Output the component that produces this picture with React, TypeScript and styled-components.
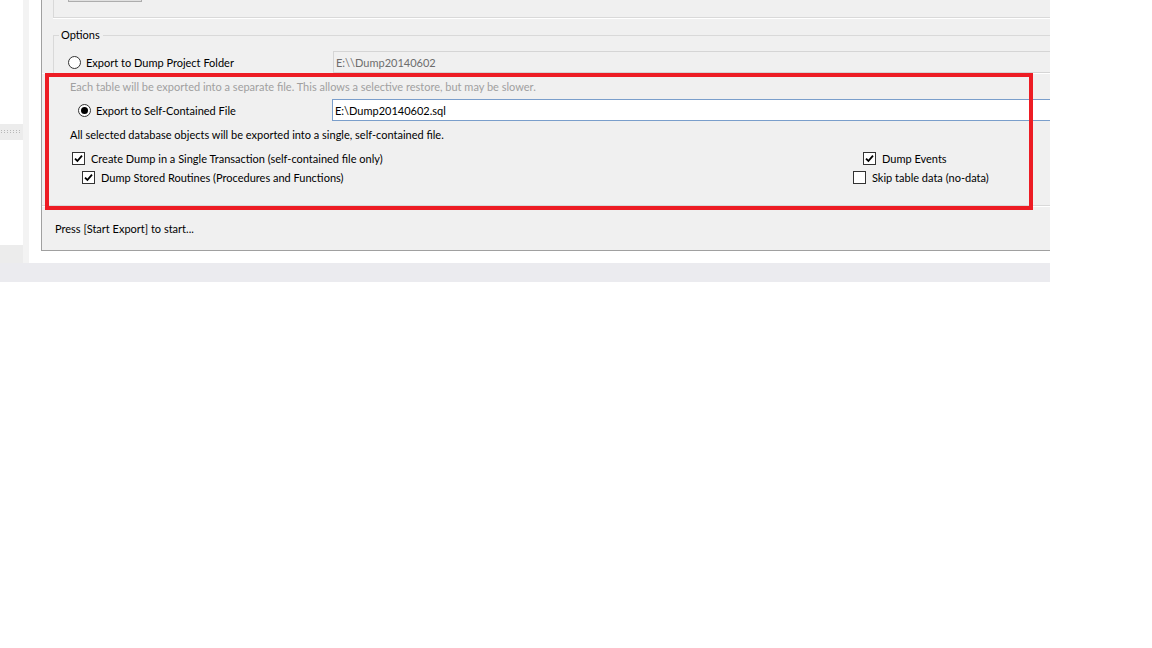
import * as React from 'react';
import styled, { createGlobalStyle } from 'styled-components';

const uiFont = `Lato, "Noto Sans", "Liberation Sans", sans-serif`;

const GlobalStyle = createGlobalStyle`
	html, body {
		margin: 0;
		padding: 0;
		background: #ffffff;
	}
	body {
		font-family: ${uiFont};
		font-size: 11px;
		color: #000000;
	}
`;

const Screen = styled.div`
	width: 1050px;
	display: flex;
	flex-direction: column;
	overflow: hidden;
`;
const Workspace = styled.div`
	display: flex;
	height: 263px;
`;
const Sidebar = styled.div`
	width: 23px;
	display: flex;
	flex-direction: column;
	background: #ffffff;
`;
const SideBlock = styled.div<{ $h?: number; $grey?: boolean }>`
	height: ${p => (p.$h ? `${p.$h}px` : 'auto')};
	flex: ${p => (p.$h ? 'none' : '1')};
	background: ${p => (p.$grey ? '#ececec' : '#ffffff')};
`;
const Grip = styled.div`
	height: 16px;
	background: #ececec;
	display: flex;
	align-items: center;
	padding-left: 1px;
	svg { display: block; }
`;
const Splitter = styled.div`
	width: 6px;
	background: #f3f3f3;
`;
const MainArea = styled.div`
	flex: 1;
	background: #ffffff;
	padding-left: 12px;
	min-width: 0;
`;
const Panel = styled.div`
	height: 251px;
	box-sizing: border-box;
	background: #f0f0f0;
	border-left: 1px solid #a0a0a0;
	border-bottom: 1px solid #a0a0a0;
	display: flex;
	flex-direction: column;
`;
const BottomBand = styled.div`
	height: 19px;
	background: #ebebef;
`;

const TopTail = styled.div`
	height: 17px;
	margin-left: 11px;
	border-left: 1px solid #d9d9d9;
	border-bottom: 1px solid #d9d9d9;
	box-shadow: 0 1px 0 #ffffff;
`;
const ButtonStub = styled.div`
	margin-left: 14px;
	width: 72px;
	height: 1px;
	background: #e1e1e1;
	border: 1px solid #adadad;
	border-top: none;
`;

const Group = styled.fieldset`
	margin: 10px 0 0 11px;
	padding: 0;
	border: none;
	border-top: 1px solid #d9d9d9;
	border-left: 1px solid #d9d9d9;
	min-width: 0;
`;
const Legend = styled.legend`
	margin-left: 5px;
	padding: 0 3px 0 2px;
	line-height: 14px;
	font-size: 11px;
`;
const LegendGap = styled.div`
	height: 9px;
`;

const ChoiceRow = styled.div<{ $labelCol: number; $indent: number }>`
	display: grid;
	grid-template-columns: ${p => p.$labelCol}px 1fr;
	align-items: center;
	height: 22px;
	padding-left: ${p => p.$indent}px;
`;
const Choice = styled.label`
	display: flex;
	align-items: center;
	gap: 5px;
	white-space: nowrap;
`;
const RadioDot = styled.span<{ $on?: boolean }>`
	width: 13px;
	height: 13px;
	box-sizing: border-box;
	border-radius: 50%;
	border: 1px solid #333333;
	background: #ffffff;
	display: flex;
	align-items: center;
	justify-content: center;
	flex: none;
	&::after {
		content: '';
		display: ${p => (p.$on ? 'block' : 'none')};
		width: 7px;
		height: 7px;
		border-radius: 50%;
		background: #000000;
	}
`;
const TextBox = styled.div<{ $disabled?: boolean }>`
	height: 22px;
	box-sizing: border-box;
	border: 1px solid ${p => (p.$disabled ? '#d5d5d5' : '#7a9ecb')};
	border-right: none;
	background: ${p => (p.$disabled ? '#f0f0f0' : '#ffffff')};
	color: ${p => (p.$disabled ? '#6d6d6d' : '#000000')};
	padding-left: 2px;
	display: flex;
	align-items: center;
	white-space: nowrap;
`;

const Pasted = styled.div`
	position: relative;
	border-top: 1px solid #ffffff;
	border-bottom: 1px solid #d9d9d9;
	box-shadow: 0 1px 0 #ffffff;
	padding-bottom: 18px;
`;
const Note = styled.div<{ $muted?: boolean; $h: number }>`
	height: ${p => p.$h}px;
	display: flex;
	align-items: center;
	padding-left: 28px;
	color: ${p => (p.$muted ? '#a0a0a0' : '#000000')};
	white-space: nowrap;
`;
const CheckGrid = styled.div`
	display: grid;
	grid-template-columns: 781px 1fr;
	grid-auto-rows: 19px;
	margin-top: 2px;
	padding-left: 30px;
`;
const CheckItem = styled.label<{ $indent?: number }>`
	display: flex;
	align-items: center;
	gap: 6px;
	padding-left: ${p => p.$indent || 0}px;
	white-space: nowrap;
`;
const Box = styled.span`
	width: 13px;
	height: 13px;
	box-sizing: border-box;
	border: 1px solid #333333;
	background: #ffffff;
	display: flex;
	align-items: center;
	justify-content: center;
	flex: none;
	svg { display: block; }
`;
const RedFrame = styled.div`
	position: absolute;
	left: 3px;
	top: -1px;
	width: 988px;
	height: 137px;
	box-sizing: border-box;
	border: 4px solid #ed1c24;
	pointer-events: none;
`;
const Status = styled.div`
	flex: 1;
	display: flex;
	align-items: center;
	padding-left: 13px;
	padding-top: 1px;
`;

const Check: React.FC<{ on?: boolean; indent?: number; children: React.ReactNode }> = ({ on, indent, children }) => (
	<CheckItem $indent={indent}>
		<Box>
			{on && (
				<svg width="9" height="9" viewBox="0 0 9 9">
					<path d="M1 4.6 L3.4 7 L8 1.6" fill="none" stroke="#000" strokeWidth="1.8" />
				</svg>
			)}
		</Box>
		{children}
	</CheckItem>
);

export default function App() {
	return (
		<Screen>
			<GlobalStyle />
			<Workspace>
				<Sidebar>
					<SideBlock $h={124} />
					<Grip>
						<svg width="20" height="4" viewBox="0 0 20 4">
							{[1, 4, 7, 10, 13, 16, 19].map(x => (
								<g key={x}>
									<rect x={x - 1} y={0} width={1} height={1} fill="#b8b8b8" />
									<rect x={x - 1} y={2} width={1} height={1} fill="#b8b8b8" />
								</g>
							))}
						</svg>
					</Grip>
					<SideBlock />
					<SideBlock $h={18} $grey />
				</Sidebar>
				<Splitter />
				<MainArea>
					<Panel>
						<TopTail>
							<ButtonStub />
						</TopTail>
						<Group>
							<Legend>Options</Legend>
							<LegendGap />
							<ChoiceRow $labelCol={265} $indent={14}>
								<Choice>
									<RadioDot />
									Export to Dump Project Folder
								</Choice>
								<TextBox $disabled>{'E:\\\\Dump20140602'}</TextBox>
							</ChoiceRow>
						</Group>
						<Pasted>
							<Note $muted $h={25}>
								Each table will be exported into a separate file. This allows a selective restore, but may be slower.
							</Note>
							<ChoiceRow $labelCol={254} $indent={36}>
								<Choice>
									<RadioDot $on />
									Export to Self-Contained File
								</Choice>
								<TextBox>{'E:\\Dump20140602.sql'}</TextBox>
							</ChoiceRow>
							<Note $h={26}>All selected database objects will be exported into a single, self-contained file.</Note>
							<CheckGrid>
								<Check on>Create Dump in a Single Transaction (self-contained file only)</Check>
								<Check on indent={10}>Dump Events</Check>
								<Check on indent={10}>Dump Stored Routines (Procedures and Functions)</Check>
								<Check>Skip table data (no-data)</Check>
							</CheckGrid>
							<RedFrame />
						</Pasted>
						<Status>Press [Start Export] to start...</Status>
					</Panel>
				</MainArea>
			</Workspace>
			<BottomBand />
		</Screen>
	);
}
